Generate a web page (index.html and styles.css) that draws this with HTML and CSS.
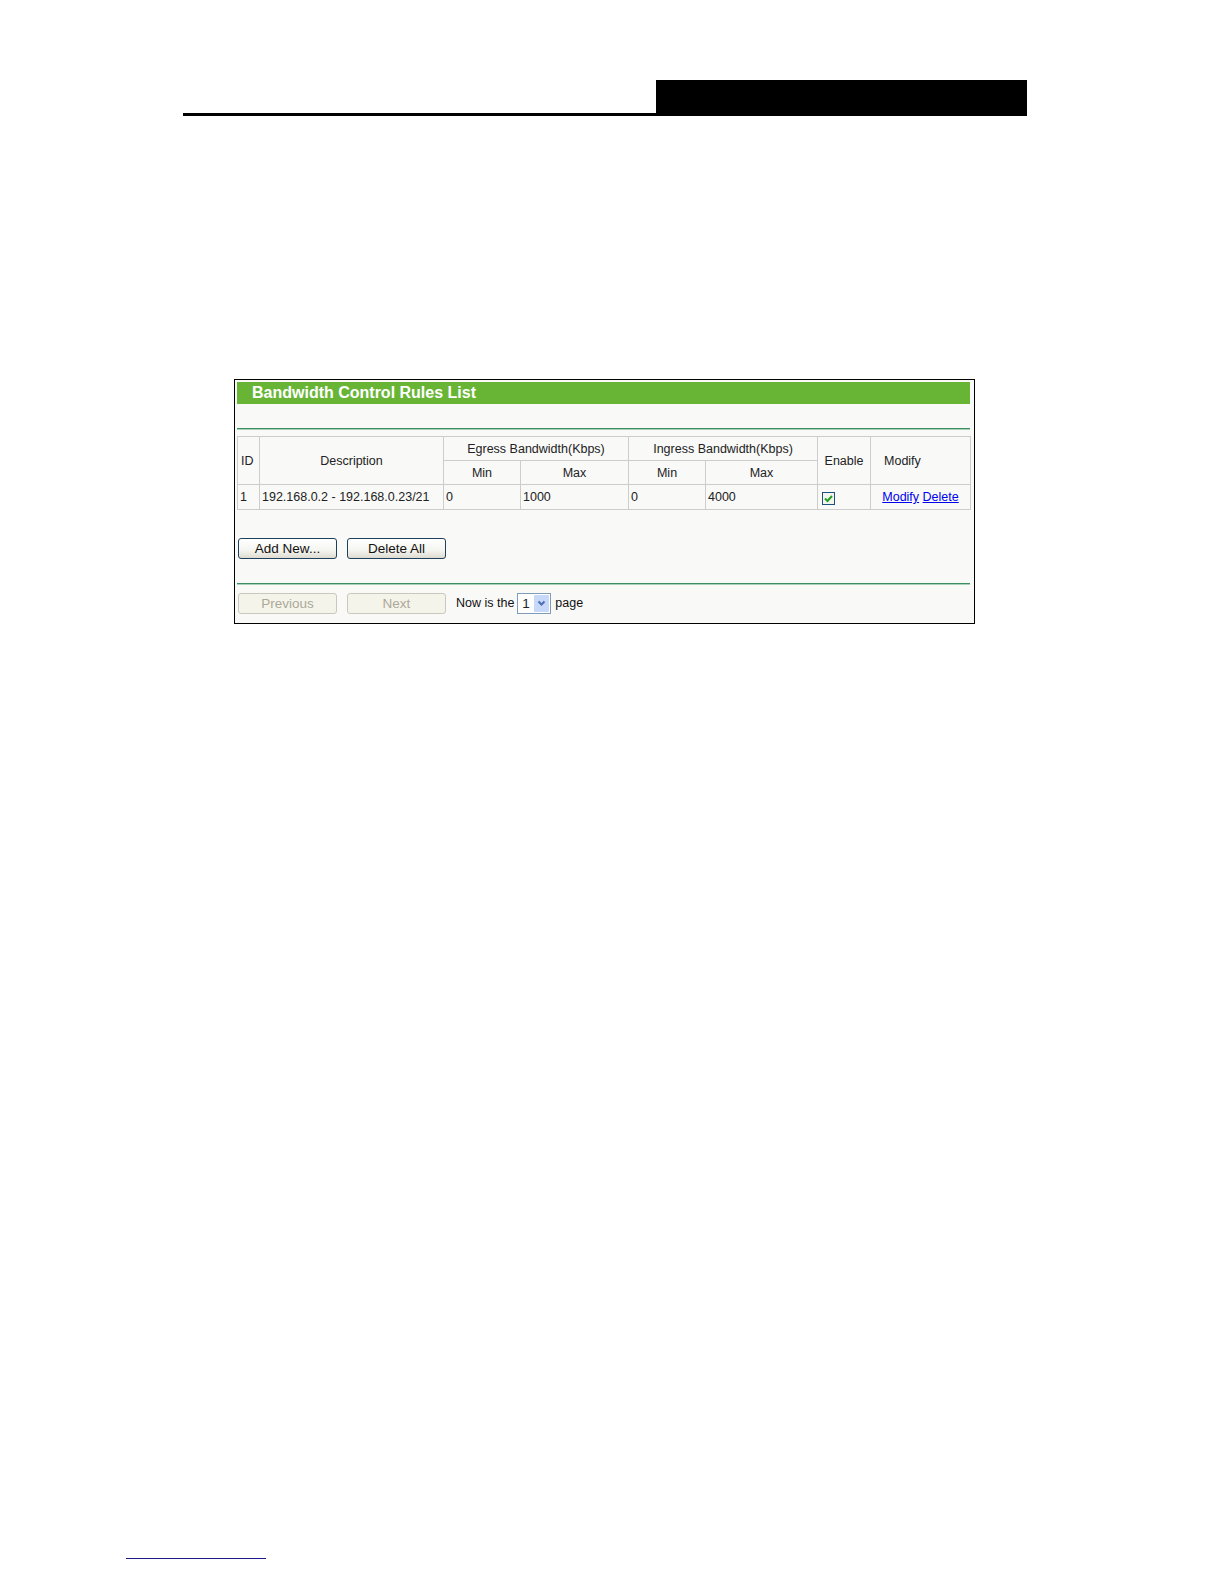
FILE: index.html
```html
<!DOCTYPE html>
<html>
<head>
<meta charset="utf-8">
<link rel="stylesheet" href="styles.css">
</head>
<body>
<div class="page">
  <div class="doc-header">
    <div class="doc-rule"></div>
    <div class="doc-tab"></div>
  </div>

  <div class="panel">
    <div class="panel-title">Bandwidth Control Rules List</div>
    <div class="panel-gap"></div>
    <div class="divider"></div>
    <table class="rules">
      <colgroup>
        <col style="width:22px"><col style="width:184px"><col style="width:77px"><col style="width:108px">
        <col style="width:77px"><col style="width:112px"><col style="width:53px"><col style="width:100px">
      </colgroup>
      <tr class="h1">
        <th rowspan="2" class="left">ID</th>
        <th rowspan="2">Description</th>
        <th colspan="2">Egress Bandwidth(Kbps)</th>
        <th colspan="2">Ingress Bandwidth(Kbps)</th>
        <th rowspan="2">Enable</th>
        <th rowspan="2" class="mod">Modify</th>
      </tr>
      <tr class="h2">
        <th>Min</th><th>Max</th><th>Min</th><th>Max</th>
      </tr>
      <tr class="data">
        <td>1</td>
        <td>192.168.0.2 - 192.168.0.23/21</td>
        <td>0</td>
        <td>1000</td>
        <td>0</td>
        <td>4000</td>
        <td class="chk"><span class="checkbox"><svg width="11" height="11" viewBox="0 0 11 11"><path d="M2 5.5 L4.5 8 L9 3" fill="none" stroke="#21a121" stroke-width="2"/></svg></span></td>
        <td class="links"><a href="#">Modify</a> <a href="#">Delete</a></td>
      </tr>
    </table>
    <div class="actions">
      <button class="btn">Add New...</button>
      <button class="btn">Delete All</button>
    </div>
    <div class="divider"></div>
    <div class="pager">
      <button class="btn disabled">Previous</button>
      <button class="btn disabled">Next</button>
      <span class="pager-text">Now is the</span>
      <span class="select"><span class="select-val">1</span><span class="select-arrow"><svg width="9" height="7" viewBox="0 0 9 7"><path d="M1.5 1.5 L4.5 4.5 L7.5 1.5" fill="none" stroke="#4d6fb5" stroke-width="2"/></svg></span></span>
      <span class="pager-text">page</span>
    </div>
  </div>

  <div class="footnote-rule"></div>
</div>
</body>
</html>
```

FILE: styles.css
```css
html, body {
  margin: 0;
  padding: 0;
  background: #ffffff;
}
html {
  overflow: hidden;
}
body {
  font-family: "Liberation Sans", Arial, sans-serif;
  color: #222;
}
.page {
  display: flex;
  flex-direction: column;
  align-items: flex-start;
}
.doc-header {
  margin-top: 80px;
  margin-left: 183px;
  width: 844px;
  height: 36px;
  display: flex;
  align-items: flex-end;
}
.doc-rule {
  width: 473px;
  height: 3px;
  background: #000;
}
.doc-tab {
  width: 371px;
  height: 36px;
  background: #000;
}
.panel {
  margin-top: 263px;
  margin-left: 234px;
  width: 733px;
  height: 242px;
  border: 1px solid #000;
  background: #f9f9f8;
  padding: 1px 4px 0 2px;
  display: flex;
  flex-direction: column;
}
.panel > * { flex: none; }
.panel-title {
  height: 22px;
  margin-top: 1px;
  background: #68b536;
  color: #fff;
  font-weight: bold;
  font-size: 16px;
  line-height: 22px;
  padding-left: 15px;
}
.panel-gap {
  height: 24px;
}
.divider {
  height: 2px;
  background: linear-gradient(#3b8e63 0 1px, #a9d1b8 1px 2px);
}
.rules {
  margin-top: 6px;
  width: 733px;
  border-collapse: collapse;
  table-layout: fixed;
  font-size: 12.5px;
}
.rules th, .rules td {
  border: 1px solid #cdcdcd;
  padding: 0 2px;
  white-space: nowrap;
  overflow: hidden;
}
.rules th {
  font-weight: normal;
  text-align: center;
}
.rules th.left { text-align: left; padding-left: 3px; }
.rules th.mod { text-align: left; padding-left: 13px; }
.rules tr.h1 th { height: 23px; }
.rules tr.h2 th { height: 23px; }
.rules tr.data td { height: 24px; text-align: left; }
.rules tr.data td.chk { padding-left: 4px; }
.checkbox {
  display: inline-flex;
  align-items: center;
  justify-content: center;
  width: 11px;
  height: 11px;
  border: 1px solid #1c5180;
  background: #f4f4ef;
  vertical-align: middle;
  margin-top: 2px;
}
.rules tr.data td.links { text-align: center; }
.links a {
  color: #0000ee;
  text-decoration: underline;
}
.actions {
  margin-top: 28px;
  height: 21px;
  display: flex;
  gap: 10px;
  padding-left: 1px;
}
.actions + .divider {
  margin-top: 24px;
}
.btn {
  width: 99px;
  height: 21px;
  padding: 0;
  font-family: "Liberation Sans", Arial, sans-serif;
  font-size: 13.5px;
  color: #111;
  border: 1px solid #1e3f5e;
  border-radius: 3px;
  background: linear-gradient(#ffffff, #f4f4f0 60%, #dedbd0);
}
.btn.disabled {
  color: #aca899;
  border-color: #cac8bb;
  background: #f5f4ea;
}
.pager {
  margin-top: 7px;
  height: 22px;
  display: flex;
  align-items: center;
  gap: 10px;
  padding-left: 1px;
  font-size: 12.5px;
}
.pager-text { color: #111; }
.select {
  display: inline-flex;
  align-items: center;
  width: 32px;
  height: 19px;
  border: 1px solid #7f9db9;
  background: #fff;
  margin-left: -7px;
  margin-right: -6px;
  font-size: 13.5px;
}
.select-val {
  flex: 1;
  padding-left: 4px;
}
.select-arrow {
  width: 15px;
  height: 17px;
  margin-right: 1px;
  background: #c8d8f8;
  display: flex;
  align-items: center;
  justify-content: center;
  border-radius: 1px;
}
.footnote-rule {
  margin-top: 934px;
  margin-left: 126px;
  width: 140px;
  height: 1px;
  background: #1c1c8a;
}
```
